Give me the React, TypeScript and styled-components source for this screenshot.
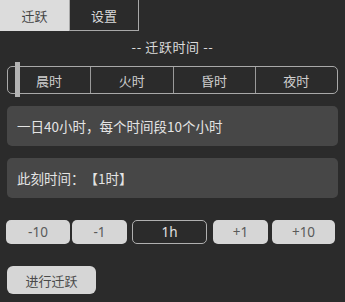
import React, { useState } from "react";
import styled, { createGlobalStyle } from "styled-components";

const GlobalStyle = createGlobalStyle`
  html, body {
    margin: 0;
    padding: 0;
    background: #2b2b2b;
  }
  body {
    font-family: "Noto Sans CJK SC", "Noto Sans", sans-serif;
    color: #e2e2e2;
    text-spacing-trim: space-all;
  }
`;

const Page = styled.div`
  width: 345px;
  height: 302px;
  background: #2b2b2b;
  overflow: hidden;
`;

const Tabs = styled.div`
  display: flex;
  height: 31px;
`;

const Tab = styled.div<{ $active?: boolean }>`
  width: ${(p) => (p.$active ? "69px" : "70px")};
  box-sizing: border-box;
  display: flex;
  align-items: center;
  justify-content: center;
  font-size: 13px;
  background: ${(p) => (p.$active ? "#dcdcdc" : "#2b2b2b")};
  color: ${(p) => (p.$active ? "#444" : "#dadada")};
  border: ${(p) => (p.$active ? "none" : "1px solid #a8a8a8")};
  border-top: none;
`;

const Body = styled.div`
  padding: 0 7px;
`;

const Heading = styled.div`
  text-align: center;
  font-size: 13px;
  letter-spacing: 0.6px;
  line-height: 16px;
  margin-top: 8px;
  color: #dcdcdc;
`;

const Segmented = styled.div`
  position: relative;
  display: grid;
  grid-template-columns: repeat(4, 1fr);
  height: 28px;
  margin-top: 11px;
  border: 1.5px solid #a9a9a9;
  border-radius: 5px;
  box-sizing: border-box;
`;

const Segment = styled.div<{ $first?: boolean }>`
  display: flex;
  align-items: center;
  justify-content: center;
  font-size: 13px;
  color: #cfcfcf;
  border-left: ${(p) => (p.$first ? "none" : "1.5px solid #9a9a9a")};
`;

const Indicator = styled.div`
  position: absolute;
  left: 7px;
  top: -5px;
  width: 5px;
  height: 35px;
  background: #b4b4b4;
`;

const InfoBox = styled.div`
  height: 40px;
  box-sizing: border-box;
  padding: 0 10px;
  display: flex;
  align-items: center;
  background: #474747;
  border-radius: 5px;
  font-size: 13.5px;
  color: #e4e4e4;
  margin-top: 12px;
`;

const StepRow = styled.div`
  display: flex;
  align-items: center;
  margin-top: 22px;
  margin-left: -1px;
  gap: 2px;
`;

const StepButton = styled.button<{ $w: number; $dark?: boolean; $ml?: number }>`
  width: ${(p) => p.$w}px;
  height: 24px;
  padding: 0;
  box-sizing: border-box;
  border-radius: 5px;
  font-family: "Noto Sans", "Noto Sans CJK SC", sans-serif;
  font-size: 13.5px;
  background: ${(p) => (p.$dark ? "#2b2b2b" : "#d6d6d6")};
  color: ${(p) => (p.$dark ? "#e0e0e0" : "#5a5a5a")};
  border: ${(p) => (p.$dark ? "1.5px solid #b0b0b0" : "none")};
  margin-left: ${(p) => p.$ml ?? 0}px;
`;

const JumpButton = styled.button`
  display: block;
  margin-top: 22px;
  width: 89px;
  height: 28px;
  padding: 0;
  border: none;
  border-radius: 6px;
  background: #d6d6d6;
  color: #4a4a4a;
  font-family: "Noto Sans CJK SC", sans-serif;
  font-size: 13px;
`;

const periods = ["晨时", "火时", "昏时", "夜时"];
const steps: { label: string; w: number; dark?: boolean; ml?: number }[] = [
  { label: "-10", w: 64 },
  { label: "-1", w: 55 },
  { label: "1h", w: 75, dark: true, ml: 3 },
  { label: "+1", w: 55, ml: 4 },
  { label: "+10", w: 63, ml: 2 },
];

export default function App() {
  const [tab] = useState(0);
  return (
    <Page>
      <GlobalStyle />
      <Tabs>
        <Tab $active={tab === 0}>迁跃</Tab>
        <Tab $active={tab === 1}>设置</Tab>
      </Tabs>
      <Body>
        <Heading>-- 迁跃时间 --</Heading>
        <Segmented>
          <Indicator />
          {periods.map((p, i) => (
            <Segment key={p} $first={i === 0}>
              {p}
            </Segment>
          ))}
        </Segmented>
        <InfoBox>一日40小时，每个时间段10个小时</InfoBox>
        <InfoBox>此刻时间：【1时】</InfoBox>
        <StepRow>
          {steps.map((s) => (
            <StepButton key={s.label} $w={s.w} $dark={s.dark} $ml={s.ml}>
              {s.label}
            </StepButton>
          ))}
        </StepRow>
        <JumpButton>进行迁跃</JumpButton>
      </Body>
    </Page>
  );
}
